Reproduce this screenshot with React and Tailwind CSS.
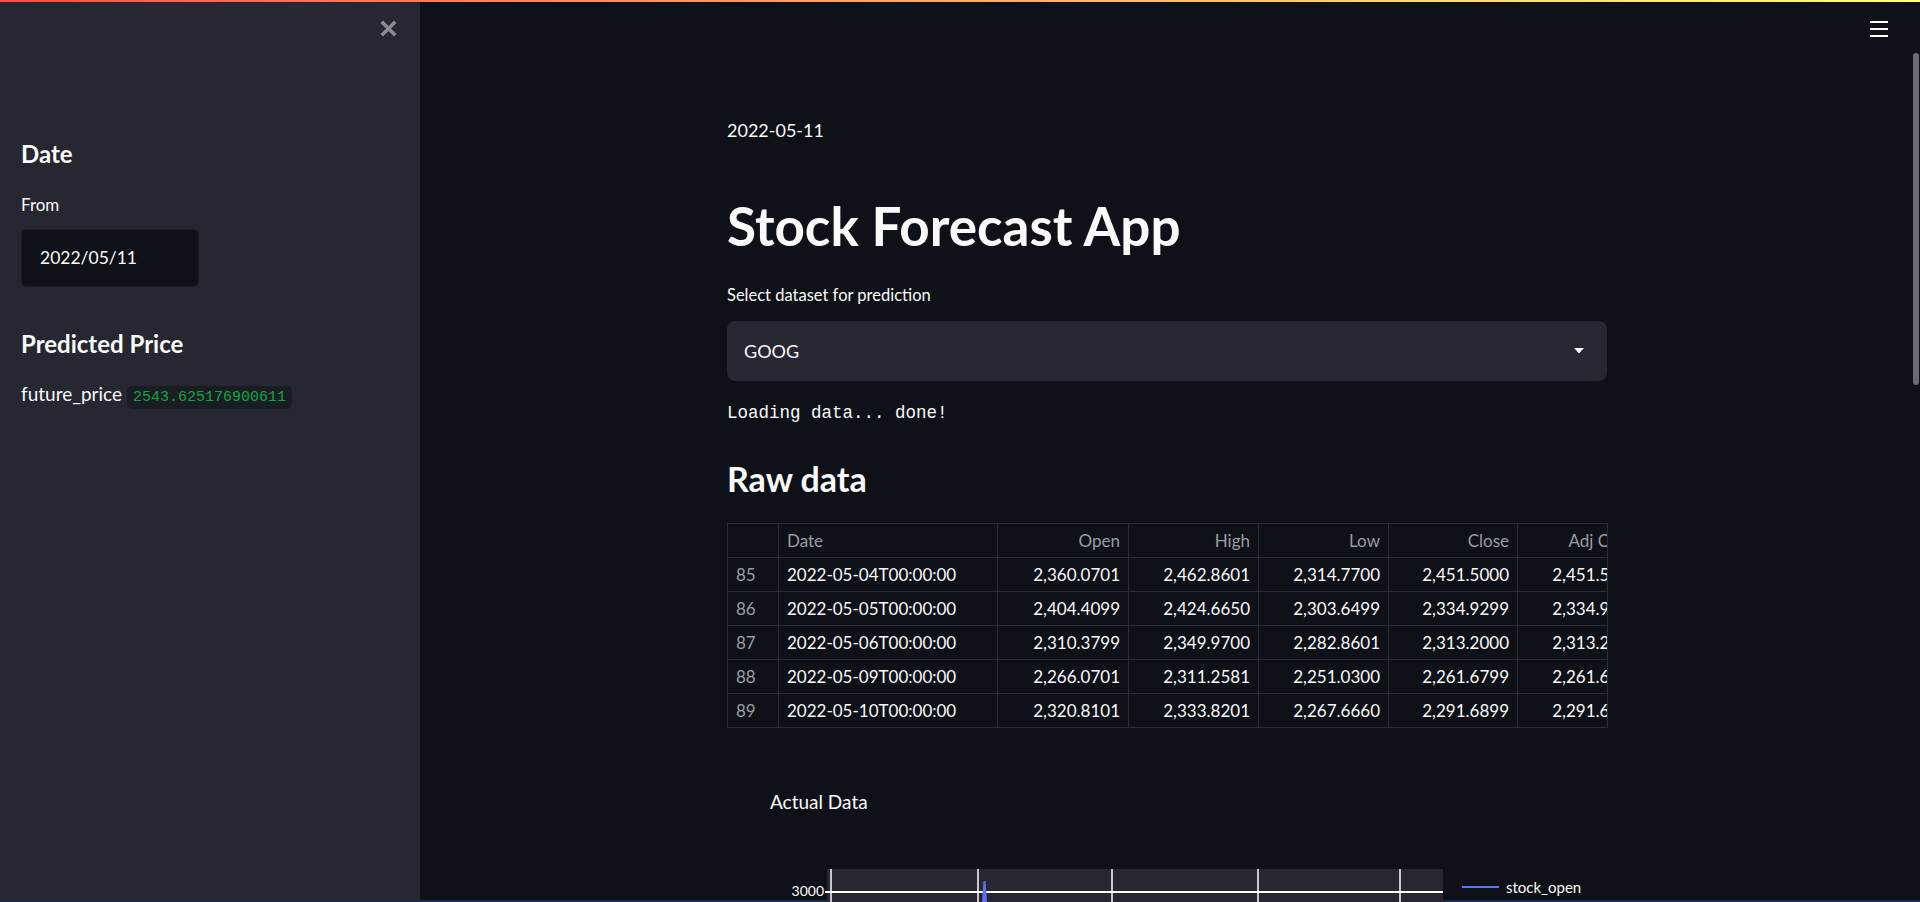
import React from "react";

const font = { fontFamily: "Lato, 'Noto Sans', sans-serif" };

const rows = [
    ["85", "2022-05-04T00:00:00", "2,360.0701", "2,462.8601", "2,314.7700", "2,451.5000", "2,451.5000"],
    ["86", "2022-05-05T00:00:00", "2,404.4099", "2,424.6650", "2,303.6499", "2,334.9299", "2,334.9299"],
    ["87", "2022-05-06T00:00:00", "2,310.3799", "2,349.9700", "2,282.8601", "2,313.2000", "2,313.2000"],
    ["88", "2022-05-09T00:00:00", "2,266.0701", "2,311.2581", "2,251.0300", "2,261.6799", "2,261.6799"],
    ["89", "2022-05-10T00:00:00", "2,320.8101", "2,333.8201", "2,267.6660", "2,291.6899", "2,291.6899"],
];

const header = ["", "Date", "Open", "High", "Low", "Close", "Adj Close"];

const rowGrid = "grid grid-cols-[51px_219px_131px_130px_130px_129px_130px] w-max";

const Cell = ({ children, idx, head }) => {
    const align = idx < 2 ? "justify-start" : "justify-end";
    const color = head || idx === 0 ? "text-[#9a9ca3]" : "text-[#fafafa]";
    return (
        <div className={`flex items-center h-[33px] px-[8px] border-r border-[#2b2e36] ${align} ${color}`}>
            <span className="whitespace-nowrap">{children}</span>
        </div>
    );
};

const DataTable = () => (
    <div className="w-[881px] border border-[#2b2e36] overflow-hidden text-[17px]">
        <div className={`${rowGrid} border-b border-[#2b2e36]`}>
            {header.map((h, i) => <Cell key={i} idx={i} head>{h}</Cell>)}
        </div>
        {rows.map((r, ri) => (
            <div key={ri} className={`${rowGrid} ${ri < rows.length - 1 ? "border-b border-[#2b2e36]" : ""}`}>
                {r.map((v, i) => <Cell key={i} idx={i}>{v}</Cell>)}
            </div>
        ))}
    </div>
);

const Chart = () => (
    <div className="flex h-[300px]">
        <div className="w-[100px] shrink-0 flex justify-end items-start pt-[14px]">
            <span className="text-[14px] leading-[16px] text-[#fafafa] pr-[1px]">3000</span>
            <div className="w-[2px] h-[1.5px] bg-white mt-[8px]" />
        </div>
        <div className="w-[616px] shrink-0 bg-[#262730]">
            <svg width="616" height="300" viewBox="0 0 616 300">
                {[4, 151, 285, 431, 573].map((x) => (
                    <line key={x} x1={x} y1="0" x2={x} y2="300" stroke="#ffffff" strokeWidth="1.5" />
                ))}
                <line x1="0" y1="23" x2="616" y2="23" stroke="#ffffff" strokeWidth="2" />
                <polygon points="154.5,40 156.5,12 158.5,12 160.5,40" fill="#636efa" />
            </svg>
        </div>
        <div className="flex items-start pt-[9px] pl-[19px] gap-[7px]">
            <div className="w-[37px] h-[2px] bg-[#636efa] mt-[8px]" />
            <span className="text-[15px] leading-[18px] text-[#fafafa]">stock_open</span>
        </div>
    </div>
);

export default function App() {
    return (
        <div className="h-[902px] w-full overflow-hidden flex flex-col bg-[#0e1117] text-[#fafafa]" style={font}>
            <div className="h-[2px] shrink-0 bg-linear-to-r from-[#ff4b4b] to-[#fffd80]" />
            <div className="flex flex-1 min-h-0">
                <aside className="w-[420px] shrink-0 bg-[#262730] relative px-[21px] pt-[137px]">
                    <button className="absolute left-[380px] top-[18px] w-[17px] h-[17px] text-[#8b8c93]">
                        <svg viewBox="0 0 17 17" width="17" height="17">
                            <path d="M3 3 L14 14 M14 3 L3 14" stroke="currentColor" strokeWidth="3.6" strokeLinecap="square" />
                        </svg>
                    </button>
                    <h3 className="text-[24px] leading-[30px] font-bold">Date</h3>
                    <div className="mt-[25px] text-[17px] leading-[22px]">From</div>
                    <div className="mt-[13px] w-[178px] h-[58px] rounded-[6px] bg-[#0e1117] border border-[#1b1d25] flex items-center pl-[18px] text-[17.5px]">
                        2022/05/11
                    </div>
                    <h3 className="mt-[42px] text-[24px] leading-[30px] font-bold">Predicted Price</h3>
                    <div className="mt-[21px] flex items-start h-[28px] gap-[5px]">
                        <span className="text-[19px] leading-[28px]">future_price</span>
                        <span
                            className="mt-[6px] h-[23px] px-[6px] rounded-[5px] bg-[#1b1d25] text-[#09ab3b] text-[15px] leading-[23px]"
                            style={{ fontFamily: "'Liberation Mono', monospace" }}
                        >
                            2543.625176900611
                        </span>
                    </div>
                </aside>
                <main className="flex-1 relative">
                    <button className="absolute right-[32px] top-[17px] w-[18px] h-[18px] flex flex-col gap-[5px] pt-[2px]">
                        <span className="block h-[2px] w-[18px] bg-white" />
                        <span className="block h-[2px] w-[18px] bg-white" />
                        <span className="block h-[2px] w-[18px] bg-white" />
                    </button>
                    <div className="absolute right-[1px] top-[51px] w-[6px] h-[332px] rounded-[3px] bg-[#6b6d73]" />

                    <div className="ml-[307px] w-[881px] pt-[114px]">
                        <div className="text-[18px] leading-[28px]">2022-05-11</div>
                        <h1 className="mt-[52px] text-[53px] leading-[60px] font-bold">Stock Forecast App</h1>
                        <div className="mt-[29px] text-[16.5px] leading-[20px]">Select dataset for prediction</div>
                        <div className="mt-[16px] h-[60px] w-[880px] rounded-[8px] bg-[#262730] flex items-center justify-between pl-[17px] pr-[23px]">
                            <span className="text-[18px]">GOOG</span>
                            <svg width="10" height="6" viewBox="0 0 10 6">
                                <path d="M0 0 L10 0 L5 5.5 Z" fill="#fafafa" />
                            </svg>
                        </div>
                        <div
                            className="mt-[20px] text-[17.5px] leading-[24px]"
                            style={{ fontFamily: "'Liberation Mono', monospace" }}
                        >
                            Loading data... done!
                        </div>
                        <h2 className="mt-[34px] text-[34px] leading-[40px] font-bold">Raw data</h2>
                        <div className="mt-[24px]">
                            <DataTable />
                        </div>
                        <div className="mt-[62px] ml-[43px] text-[19px] leading-[24px]">Actual Data</div>
                        <div className="mt-[55px]">
                            <Chart />
                        </div>
                    </div>
                </main>
            </div>
            <div className="h-[2px] shrink-0 bg-[#1a2b50]" />
        </div>
    );
}
